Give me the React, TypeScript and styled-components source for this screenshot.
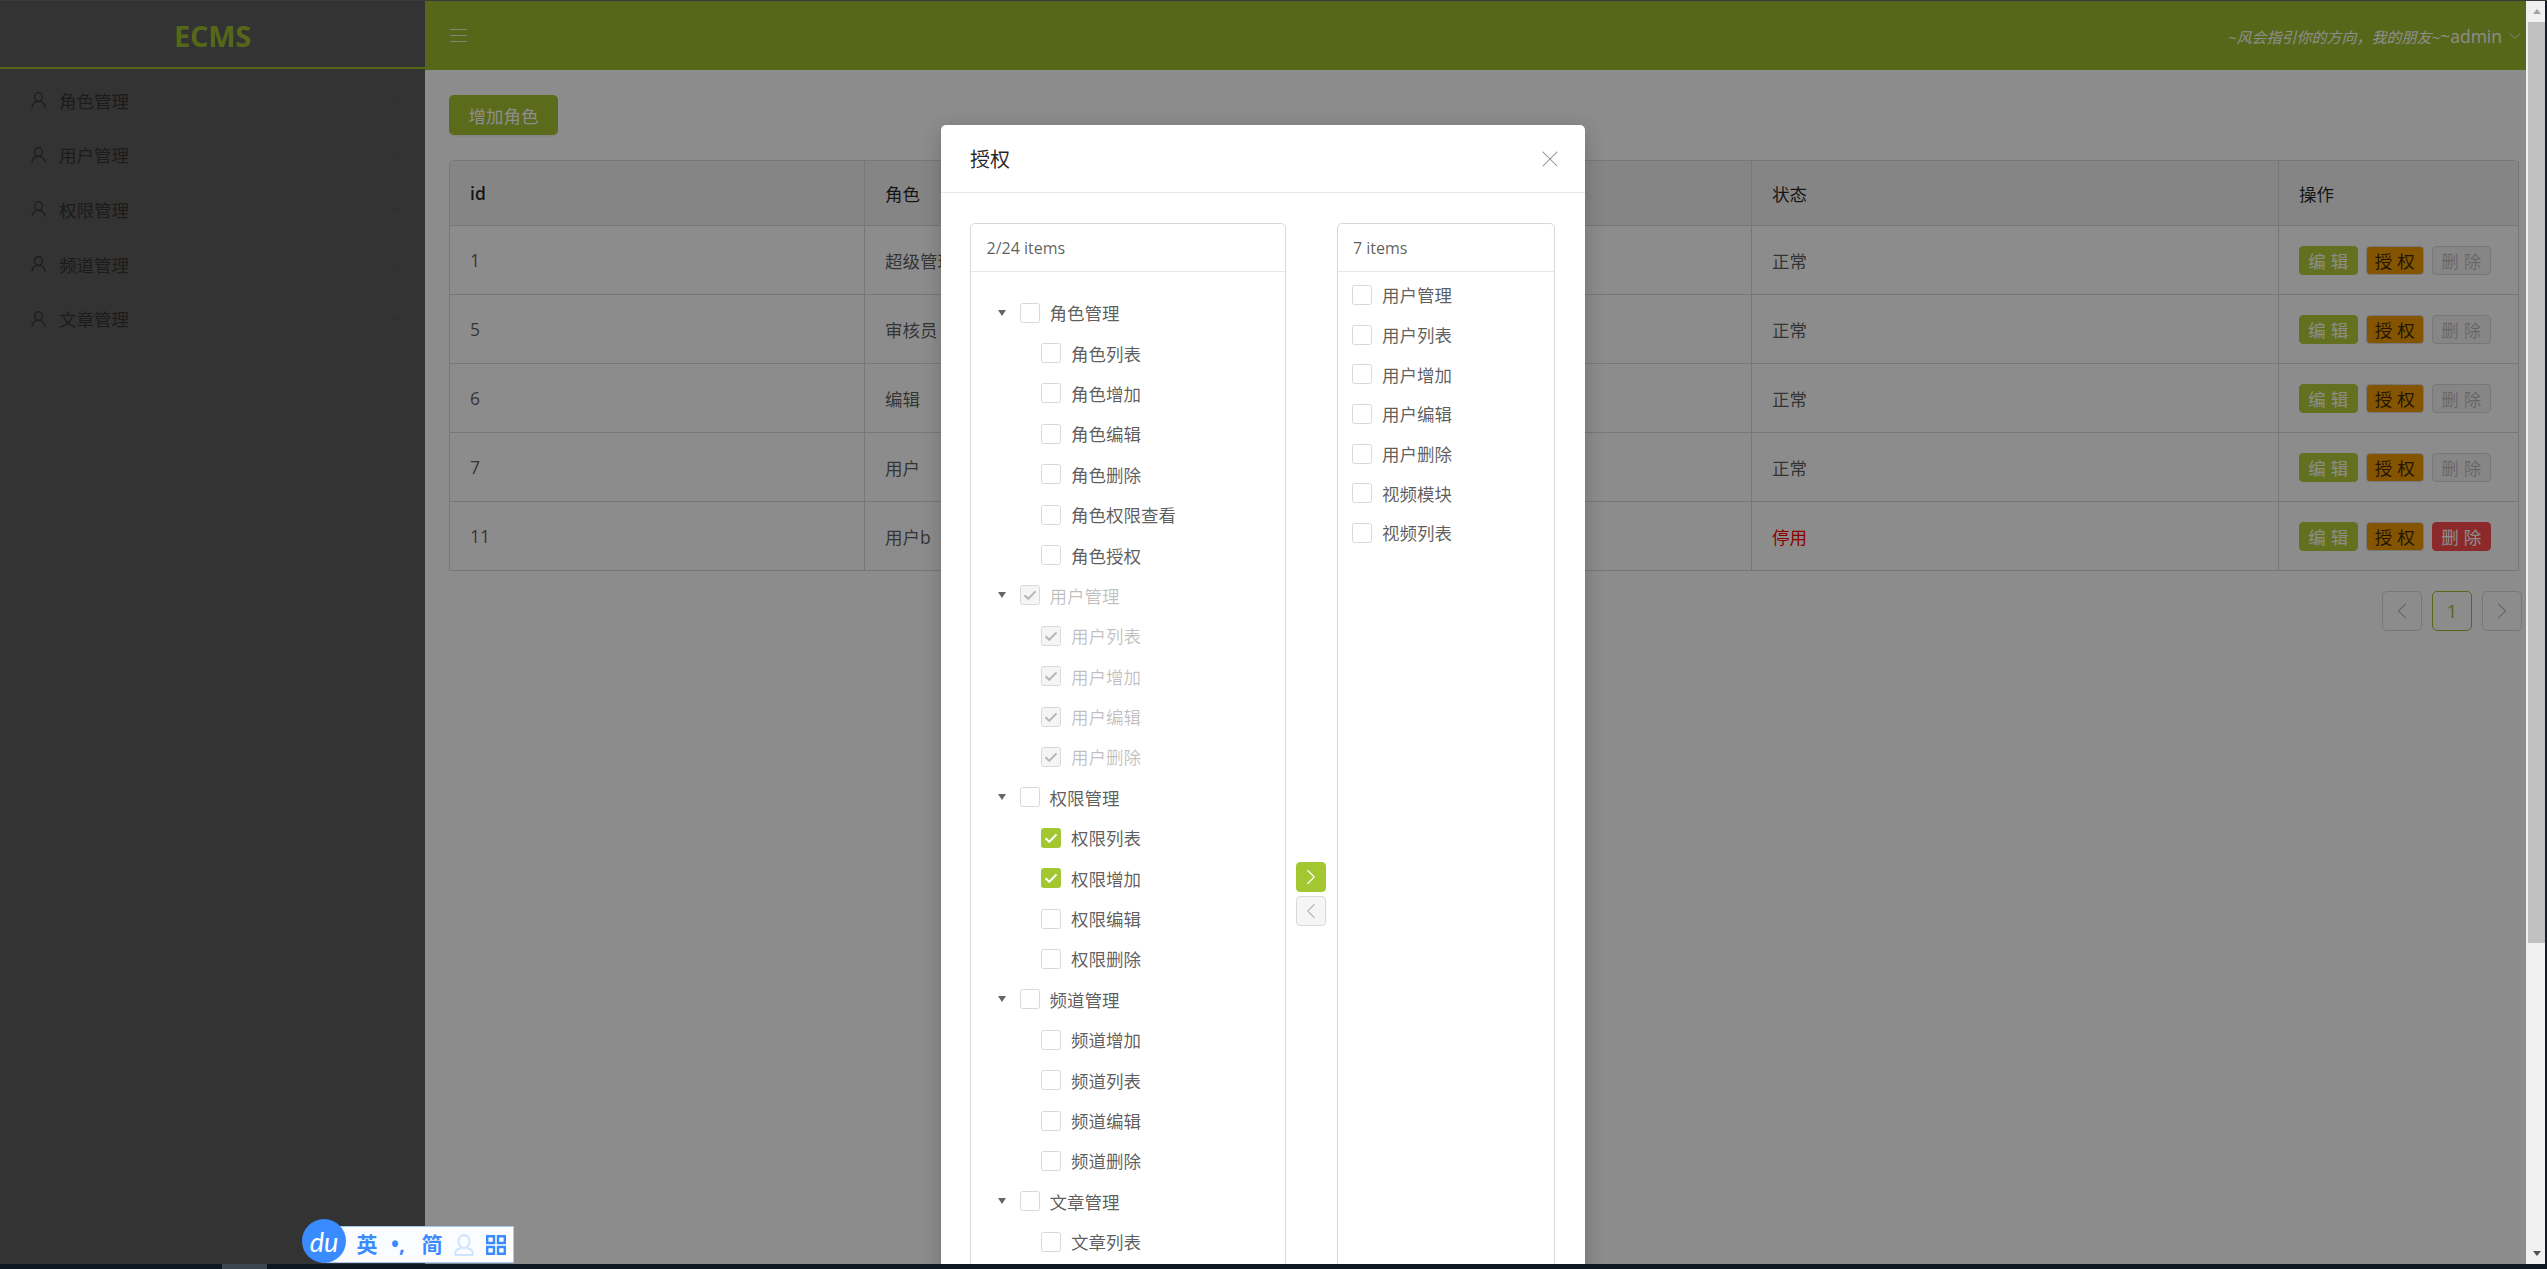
// App.tsx
import React from "react";
import styled, { createGlobalStyle } from "styled-components";
import { ChevronDown, ChevronLeft, ChevronRight, X } from "lucide-react";

const primary = "#9fbc30";

const GlobalStyle = createGlobalStyle`
  html, body {
    margin: 0;
    padding: 0;
    overflow: hidden;
  }
  body {
    font-family: "Open Sans", "Noto Sans CJK SC", sans-serif;
    font-size: 17.5px;
  }
  * {
    box-sizing: border-box;
  }
`;

// screen frame
const Screen = styled.div`
  position: relative;
  width: 2547px;
  height: 1269px;
  display: flex;
  flex-direction: column;
  overflow: hidden;
  background: #0b1820;
`;

const TopEdge = styled.div`
  height: 1px;
  flex: none;
  background: #3a3a3a;
`;

const Viewport = styled.div`
  height: 1263px;
  flex: none;
  display: flex;
  border-right: 2px solid #1a1a2e;
`;

const Taskbar = styled.div`
  height: 5px;
  flex: none;
  padding-left: 222px;
`;

const TaskbarTab = styled.div`
  width: 45px;
  height: 100%;
  background: #3a4650;
`;

const Scrollbar = styled.div`
  width: 19px;
  flex: none;
  display: flex;
  flex-direction: column;
  background: #f0f0f0;
`;

const ScrollButton = styled.div`
  height: 21px;
  flex: none;
  display: flex;
  align-items: center;
  justify-content: center;
`;

const ScrollArrow = styled.span<{ $down?: boolean }>`
  width: 0;
  height: 0;
  margin-left: 2px;
  border-left: 4.5px solid transparent;
  border-right: 4.5px solid transparent;
  border-top: ${(p) => (p.$down ? "5px solid #505050" : "none")};
  border-bottom: ${(p) => (p.$down ? "none" : "5px solid #a3a3a3")};
`;

const ScrollThumb = styled.div`
  height: 921px;
  flex: none;
  margin-left: 2px;
  background: #c0c0c0;
`;

const ScrollTrack = styled.div`
  flex: 1;
`;

// page
const Page = styled.div`
  position: relative;
  flex: 1;
  min-width: 0;
  display: flex;
  overflow: hidden;
  background: #fff;
`;

const Sidebar = styled.aside`
  width: 425px;
  flex: none;
  background: #5d5d5d;
`;

const Logo = styled.div`
  height: 68px;
  display: flex;
  align-items: center;
  justify-content: center;
  padding-top: 2px;
  border-bottom: 2px solid ${primary};
  color: ${primary};
  font-size: 29px;
  font-weight: 700;
  letter-spacing: -0.3px;
`;

const Menu = styled.nav`
  padding-top: 4px;
`;

const MenuItem = styled.div`
  height: 54.6px;
  display: flex;
  align-items: center;
  padding: 0 24px 0 31px;
  color: #333;
`;

const MenuLabel = styled.span`
  flex: 1;
  margin-left: 13px;
`;

const Main = styled.main`
  flex: 1;
  min-width: 0;
`;

const TopBar = styled.header`
  height: 69px;
  display: flex;
  align-items: center;
  justify-content: space-between;
  padding: 0 1px 0 25px;
  background: ${primary};
  color: #fff;
`;

const Motto = styled.div`
  display: flex;
  align-items: center;
  gap: 3px;
`;

const MottoItalic = styled.em`
  font-style: italic;
  font-size: 15px;
`;

const Content = styled.section`
  padding: 25px 7px 0 24px;
`;

const AddButton = styled.button`
  display: block;
  width: 109px;
  height: 40px;
  padding: 0;
  border: 0;
  border-radius: 5px;
  background: #a8c232;
  color: #fff;
  font: inherit;
  box-shadow: 0 2px 0 rgba(0, 0, 0, 0.045);
`;

const Table = styled.table`
  width: 2070px;
  margin-top: 25px;
  table-layout: fixed;
  border-collapse: separate;
  border-spacing: 0;
  border-top: 1px solid #d9d9d9;
  border-left: 1px solid #d9d9d9;
  border-radius: 5px 5px 0 0;
`;

const HeadCell = styled.th<{ $strong?: boolean }>`
  height: 65px;
  padding: 0 20px;
  text-align: left;
  font-weight: ${(p) => (p.$strong ? 600 : 400)};
  color: rgba(0, 0, 0, 0.85);
  background: #f2f2f2;
  border-right: 1px solid #d9d9d9;
  border-bottom: 1px solid #d9d9d9;
`;

const Cell = styled.td<{ $danger?: boolean }>`
  height: 69px;
  padding: 0 20px;
  color: ${(p) => (p.$danger ? "#f00" : "rgba(0, 0, 0, 0.65)")};
  border-right: 1px solid #d9d9d9;
  border-bottom: 1px solid #d9d9d9;
`;

const ActionGroup = styled.div`
  display: flex;
  gap: 8px;
`;

const ActionButton = styled.button<{ $kind: "edit" | "grant" | "remove" | "off" }>`
  width: 58.5px;
  height: 29px;
  padding: 0 0 0 5px;
  border-radius: 4px;
  font: inherit;
  letter-spacing: 5px;
  white-space: nowrap;
  border: 1px solid
    ${(p) =>
      p.$kind === "edit"
        ? "#b2cd3a"
        : p.$kind === "grant"
          ? "#d9d9d9"
          : p.$kind === "remove"
            ? "#ff4d4f"
            : "#d9d9d9"};
  background: ${(p) =>
    p.$kind === "edit"
      ? "#b2cd3a"
      : p.$kind === "grant"
        ? "#f09a00"
        : p.$kind === "remove"
          ? "#ff4d4f"
          : "#f5f5f5"};
  color: ${(p) =>
    p.$kind === "grant"
      ? "rgba(0, 0, 0, 0.75)"
      : p.$kind === "off"
        ? "rgba(0, 0, 0, 0.25)"
        : "#fff"};
`;

const Pagination = styled.div`
  display: flex;
  justify-content: flex-end;
  gap: 10px;
  margin: 20px -3px 0 0;
`;

const PageItem = styled.div<{ $active?: boolean }>`
  width: 40px;
  height: 40px;
  display: flex;
  align-items: center;
  justify-content: center;
  border: 1px solid ${(p) => (p.$active ? primary : "#d9d9d9")};
  border-radius: 5px;
  color: ${(p) => (p.$active ? primary : "rgba(0, 0, 0, 0.35)")};
`;

// modal
const Overlay = styled.div`
  position: absolute;
  inset: 0;
  display: flex;
  justify-content: center;
  padding-top: 124px;
  background: rgba(0, 0, 0, 0.45);
`;

const Modal = styled.div`
  width: 644px;
  height: fit-content;
  flex: none;
  background: #fff;
  border-radius: 5px;
  box-shadow: 0 5px 20px rgba(0, 0, 0, 0.2);
`;

const ModalHeader = styled.div`
  height: 68px;
  display: flex;
  align-items: center;
  justify-content: space-between;
  padding: 0 21px 0 29px;
  border-bottom: 1px solid #e8e8e8;
  color: rgba(0, 0, 0, 0.85);
  font-size: 20px;
`;

const CloseIcon = styled(X)`
  color: #8c8c8c;
`;

const ModalBody = styled.div`
  display: flex;
  padding: 30px 30px 30px 29px;
`;

const TransferList = styled.div<{ $width: number }>`
  width: ${(p) => p.$width}px;
  height: 1342px;
  flex: none;
  border: 1px solid #d9d9d9;
  border-radius: 5px;
  color: rgba(0, 0, 0, 0.65);
`;

const ListHeader = styled.div`
  height: 48px;
  display: flex;
  align-items: center;
  padding-left: 15.5px;
  border-bottom: 1px solid #e8e8e8;
  font-size: 16px;
`;

const TreeBody = styled.div`
  padding-top: 20.5px;
`;

const TreeRow = styled.div<{ $child?: boolean; $off?: boolean }>`
  height: 40.4px;
  display: flex;
  align-items: center;
  padding-left: ${(p) => (p.$child ? "70px" : "21px")};
  color: ${(p) => (p.$off ? "rgba(0, 0, 0, 0.25)" : "inherit")};
`;

const Caret = styled.span`
  width: 0;
  height: 0;
  margin: 0 14px 0 5.5px;
  border-left: 4.5px solid transparent;
  border-right: 4.5px solid transparent;
  border-top: 6px solid #666;
`;

const Box = styled.span<{ $state?: "on" | "off" }>`
  width: 20px;
  height: 20px;
  flex: none;
  display: flex;
  align-items: center;
  justify-content: center;
  margin-right: 10px;
  border: 1px solid ${(p) => (p.$state === "on" ? "#a2c731" : "#d9d9d9")};
  border-radius: 2.5px;
  background: ${(p) =>
    p.$state === "on" ? "#a2c731" : p.$state === "off" ? "#f5f5f5" : "#fff"};
  color: ${(p) => (p.$state === "on" ? "#fff" : "rgba(0, 0, 0, 0.25)")};
`;

const TargetBody = styled.div`
  padding-top: 3px;
`;

const TargetRow = styled.div`
  height: 39.7px;
  display: flex;
  align-items: center;
  padding-left: 14.5px;
`;

const Operations = styled.div`
  width: 50.5px;
  flex: none;
  display: flex;
  flex-direction: column;
  align-items: center;
  justify-content: center;
  gap: 4px;
`;

const MoveButton = styled.div<{ $on?: boolean }>`
  width: 30px;
  height: 30px;
  display: flex;
  align-items: center;
  justify-content: center;
  border: 1px solid ${(p) => (p.$on ? "#a2c731" : "#d9d9d9")};
  border-radius: 4px;
  background: ${(p) => (p.$on ? "#a2c731" : "#f5f5f5")};
  color: ${(p) => (p.$on ? "#fff" : "rgba(0, 0, 0, 0.25)")};
`;

// input method bar lying over the page
const Ime = styled.div`
  position: absolute;
  left: 302px;
  top: 1219px;
  width: 212px;
  height: 44px;
`;

const ImeBar = styled.div`
  position: absolute;
  left: 20px;
  right: 0;
  top: 7px;
  bottom: 0;
  display: flex;
  align-items: center;
  padding-left: 32px;
  background: #fafcff;
  border: 1px solid #a8c8f8;
  color: #3a8bff;
`;

const ImeBadge = styled.div`
  position: absolute;
  left: 0;
  top: 0;
  width: 44px;
  height: 44px;
  display: flex;
  align-items: center;
  justify-content: center;
  border-radius: 50%;
  background: #3a8bff;
  color: #fff;
  font-family: "Lato", sans-serif;
  font-style: italic;
  font-size: 27px;
  line-height: 1;
`;

const ImeGlyph = styled.span<{ $width: number }>`
  width: ${(p) => p.$width}px;
  flex: none;
  display: flex;
  align-items: center;
  justify-content: center;
  font-size: 21px;
  font-weight: 700;
  line-height: 1;
`;

const UserIcon = ({ color = "currentColor" }: { color?: string }) => (
  <svg width="15" height="16" viewBox="0 0 15 16" fill="none" stroke={color} strokeWidth="1.2">
    <ellipse cx="7.5" cy="5" rx="3.8" ry="4.4" />
    <path d="M1 15.7C1.3 11.8 3.8 9.4 7.5 9.4S13.7 11.8 14 15.7" />
  </svg>
);

const Check = () => (
  <svg width="14" height="14" viewBox="0 0 14 14" fill="none" stroke="currentColor" strokeWidth="2">
    <path d="M1.5 7.2 5.3 10.8 12.5 3.4" />
  </svg>
);

const MenuLines = () => (
  <svg width="17" height="15" viewBox="0 0 17 15" stroke="rgba(255,255,255,0.8)" strokeWidth="1.2">
    <path d="M0 1.5H17M0 7.5H17M0 13.5H17" />
  </svg>
);

const menus = ["角色管理", "用户管理", "权限管理", "频道管理", "文章管理"];

const roles = [
  { id: 1, name: "超级管理员", active: true },
  { id: 5, name: "审核员", active: true },
  { id: 6, name: "编辑", active: true },
  { id: 7, name: "用户", active: true },
  { id: 11, name: "用户b", active: false },
];

type TreeNode = { title: string; state?: "on" | "off"; children: { title: string; state?: "on" | "off" }[] };

const tree: TreeNode[] = [
  {
    title: "角色管理",
    children: ["角色列表", "角色增加", "角色编辑", "角色删除", "角色权限查看", "角色授权"].map((title) => ({ title })),
  },
  {
    title: "用户管理",
    state: "off",
    children: ["用户列表", "用户增加", "用户编辑", "用户删除"].map((title) => ({ title, state: "off" as const })),
  },
  {
    title: "权限管理",
    children: [
      { title: "权限列表", state: "on" },
      { title: "权限增加", state: "on" },
      { title: "权限编辑" },
      { title: "权限删除" },
    ],
  },
  {
    title: "频道管理",
    children: ["频道增加", "频道列表", "频道编辑", "频道删除"].map((title) => ({ title })),
  },
  { title: "文章管理", children: [{ title: "文章列表" }] },
];

const targets = ["用户管理", "用户列表", "用户增加", "用户编辑", "用户删除", "视频模块", "视频列表"];

const App: React.FC = () => {
  return (
    <Screen>
      <GlobalStyle />
      <TopEdge />
      <Viewport>
        <Page>
          <Sidebar>
            <Logo>ECMS</Logo>
            <Menu>
              {menus.map((m) => (
                <MenuItem key={m}>
                  <UserIcon />
                  <MenuLabel>{m}</MenuLabel>
                  <ChevronDown size={11} strokeWidth={1} color="#4a4a4a" />
                </MenuItem>
              ))}
            </Menu>
          </Sidebar>
          <Main>
            <TopBar>
              <MenuLines />
              <Motto>
                <span>
                  <MottoItalic>~风会指引你的方向，我的朋友~</MottoItalic>~admin
                </span>
                <ChevronDown size={20} strokeWidth={1} />
              </Motto>
            </TopBar>
            <Content>
              <AddButton>增加角色</AddButton>
              <Table>
                <colgroup>
                  <col style={{ width: 415 }} />
                  <col style={{ width: 887 }} />
                  <col style={{ width: 527 }} />
                  <col />
                </colgroup>
                <thead>
                  <tr>
                    <HeadCell $strong>id</HeadCell>
                    <HeadCell>角色</HeadCell>
                    <HeadCell>状态</HeadCell>
                    <HeadCell>操作</HeadCell>
                  </tr>
                </thead>
                <tbody>
                  {roles.map((r) => (
                    <tr key={r.id}>
                      <Cell>{r.id}</Cell>
                      <Cell>{r.name}</Cell>
                      <Cell $danger={!r.active}>{r.active ? "正常" : "停用"}</Cell>
                      <Cell>
                        <ActionGroup>
                          <ActionButton $kind="edit">编辑</ActionButton>
                          <ActionButton $kind="grant">授权</ActionButton>
                          <ActionButton $kind={r.active ? "off" : "remove"}>删除</ActionButton>
                        </ActionGroup>
                      </Cell>
                    </tr>
                  ))}
                </tbody>
              </Table>
              <Pagination>
                <PageItem>
                  <ChevronLeft size={28} strokeWidth={0.9} />
                </PageItem>
                <PageItem $active>1</PageItem>
                <PageItem>
                  <ChevronRight size={28} strokeWidth={0.9} />
                </PageItem>
              </Pagination>
            </Content>
          </Main>
          <Overlay>
            <Modal>
              <ModalHeader>
                <span>授权</span>
                <CloseIcon size={28} strokeWidth={0.9} />
              </ModalHeader>
              <ModalBody>
                <TransferList $width={316}>
                  <ListHeader>2/24 items</ListHeader>
                  <TreeBody>
                    {tree.map((node) => (
                      <React.Fragment key={node.title}>
                        <TreeRow $off={node.state === "off"}>
                          <Caret />
                          <Box $state={node.state}>{node.state && <Check />}</Box>
                          {node.title}
                        </TreeRow>
                        {node.children.map((c) => (
                          <TreeRow key={c.title} $child $off={c.state === "off"}>
                            <Box $state={c.state}>{c.state && <Check />}</Box>
                            {c.title}
                          </TreeRow>
                        ))}
                      </React.Fragment>
                    ))}
                  </TreeBody>
                </TransferList>
                <Operations>
                  <MoveButton $on>
                    <ChevronRight size={26} strokeWidth={1} />
                  </MoveButton>
                  <MoveButton>
                    <ChevronLeft size={26} strokeWidth={1} />
                  </MoveButton>
                </Operations>
                <TransferList $width={218.5}>
                  <ListHeader>7 items</ListHeader>
                  <TargetBody>
                    {targets.map((t) => (
                      <TargetRow key={t}>
                        <Box />
                        {t}
                      </TargetRow>
                    ))}
                  </TargetBody>
                </TransferList>
              </ModalBody>
            </Modal>
          </Overlay>
        </Page>
        <Scrollbar>
          <ScrollButton>
            <ScrollArrow />
          </ScrollButton>
          <ScrollThumb />
          <ScrollTrack />
          <ScrollButton>
            <ScrollArrow $down />
          </ScrollButton>
        </Scrollbar>
      </Viewport>
      <Taskbar>
        <TaskbarTab />
      </Taskbar>
      <Ime>
        <ImeBar>
          <ImeGlyph $width={24}>英</ImeGlyph>
          <ImeGlyph $width={38}>•,</ImeGlyph>
          <ImeGlyph $width={30}>简</ImeGlyph>
          <ImeGlyph $width={34}>
            <svg width="22" height="22" viewBox="0 0 22 22" fill="none" stroke="#cfe2ff" strokeWidth="2">
              <ellipse cx="11" cy="7.5" rx="5.5" ry="6.5" />
              <path d="M2 21C2 16.5 5 14.5 8 14M20 21C20 16.5 17 14.5 14 14M2 21H20" />
            </svg>
          </ImeGlyph>
          <ImeGlyph $width={30}>
            <svg width="20" height="20" viewBox="0 0 20 20" fill="none" stroke="currentColor" strokeWidth="2.4">
              <path d="M1.2 1.2H8V8H1.2ZM12 1.2H18.8V8H12ZM1.2 12H8V18.8H1.2ZM12 12H18.8V18.8H12Z" />
            </svg>
          </ImeGlyph>
        </ImeBar>
        <ImeBadge>du</ImeBadge>
      </Ime>
    </Screen>
  );
};

export default App;
